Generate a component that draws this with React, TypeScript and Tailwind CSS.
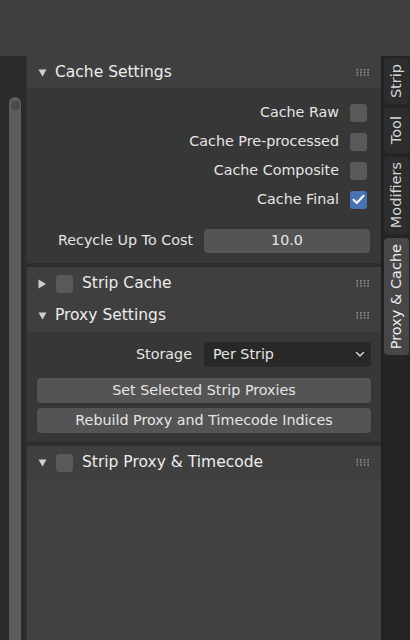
import React from 'react';

const font = { fontFamily: '"DejaVu Sans", "Liberation Sans", sans-serif' };

function Grip() {
  return (
    <svg width="14" height="7" viewBox="0 0 14 7" className="shrink-0">
      {[0, 1, 2].map((r) =>
        [0, 1, 2, 3].map((c) => (
          <rect key={`${r}-${c}`} x={c * 3.6 + 0.5} y={r * 2.6} width="1.6" height="1.6" fill="#8c8c8c" />
        ))
      )}
    </svg>
  );
}

function Tri({ open }: { open: boolean }) {
  return open ? (
    <svg width="9" height="8" viewBox="0 0 9 8" className="shrink-0">
      <path d="M0.5 0.5 L8.5 0.5 L4.5 7.5 Z" fill="#cfcfcf" />
    </svg>
  ) : (
    <svg width="9" height="10" viewBox="0 0 9 10" className="shrink-0">
      <path d="M0.5 0.5 L8 5 L0.5 9.5 Z" fill="#cfcfcf" />
    </svg>
  );
}

function Check({ on = false }: { on?: boolean }) {
  return (
    <div
      className={`flex h-[18px] w-[17px] shrink-0 items-center justify-center rounded-[3px] ${
        on ? 'bg-[#4772b3]' : 'bg-[#595959]'
      }`}
    >
      {on && (
        <svg width="13" height="11" viewBox="0 0 13 11">
          <path d="M1.5 5.8 L4.8 9 L11.5 1.8" fill="none" stroke="#ffffff" strokeWidth="2" strokeLinecap="round" strokeLinejoin="round" />
        </svg>
      )}
    </div>
  );
}

function Header({ title, open, check }: { title: string; open: boolean; check?: boolean }) {
  return (
    <div className="flex h-[33px] items-center bg-[#3f3f3f] pl-[11px] pr-[11px]">
      <Tri open={open} />
      {check ? (
        <div className="ml-[9px] flex items-center gap-[9px]">
          <Check />
          <span className="text-[15.5px] text-[#ececec]">{title}</span>
        </div>
      ) : (
        <span className="ml-[8px] text-[15.5px] text-[#ececec]">{title}</span>
      )}
      <div className="flex-1" />
      <Grip />
    </div>
  );
}

function CheckRow({ label, on }: { label: string; on?: boolean }) {
  return (
    <div className="flex h-[29px] items-center justify-end gap-[11px] pr-[14px]">
      <span className="text-[14.3px] text-[#e4e4e4]">{label}</span>
      <Check on={on} />
    </div>
  );
}

function Tab({ label, h, active }: { label: string; h: string; active?: boolean }) {
  return (
    <div
      className={`flex w-[25px] items-center justify-center rounded-[4px] ${h} ${
        active ? 'bg-[#474747] text-[#ededed]' : 'bg-[#2d2d2d] text-[#d4d4d4]'
      }`}
    >
      <span className="rotate-180 text-[14.5px] leading-none [writing-mode:vertical-rl]">{label}</span>
    </div>
  );
}

export default function App() {
  return (
    <div className="flex h-[640px] w-[410px] flex-col overflow-hidden bg-[#404040]" style={font}>
      <div className="h-[56px] shrink-0" />
      <div className="flex flex-1">
        {/* left scrollbar gutter */}
        <div className="flex w-[25px] flex-col bg-[#2b2b2b] pl-[9px] pt-[41px]">
          <div className="flex w-[12px] flex-1 justify-center rounded-t-full bg-[#5c5c5c] pt-[4px]">
            <div className="h-[9px] w-[9px] rounded-full bg-[#4a4a4a]" />
          </div>
        </div>
        <div className="w-[2px] bg-[#2f2f2f]" />

        {/* panels */}
        <div className="flex flex-1 flex-col bg-[#3f3f3f]">
          <div className="h-[32px]">
            <Header title="Cache Settings" open />
          </div>
          <div className="flex flex-col bg-[#373737] pb-[10px] pt-[10px]">
            <CheckRow label="Cache Raw" />
            <CheckRow label="Cache Pre-processed" />
            <CheckRow label="Cache Composite" />
            <CheckRow label="Cache Final" on />
            <div className="mt-[15px] flex h-[24px] items-center pr-[11px]">
              <span className="w-[177px] pr-[11px] text-right text-[14.3px] text-[#e4e4e4]">Recycle Up To Cost</span>
              <div className="flex h-[24px] flex-1 items-center justify-center rounded-[4px] bg-[#545454] text-[14.3px] text-[#e4e4e4]">
                10.0
              </div>
            </div>
          </div>
          <div className="h-[4px] bg-[#2e2e2e]" />
          <Header title="Strip Cache" open={false} check />
          <div className="-mt-[1px]">
            <Header title="Proxy Settings" open />
          </div>
          <div className="flex flex-col bg-[#373737] pb-[9px] pl-[10px] pr-[10px] pt-[10px]">
            <div className="flex h-[25px] items-center">
              <span className="w-[167px] pr-[12px] text-right text-[14.3px] text-[#e4e4e4]">Storage</span>
              <div className="flex h-[25px] flex-1 items-center justify-between rounded-[4px] bg-[#282828] pl-[9px] pr-[6px] text-[14.3px] text-[#e4e4e4]">
                <span>Per Strip</span>
                <svg width="10" height="7" viewBox="0 0 10 7">
                  <path d="M1.5 1.5 L5 5 L8.5 1.5" fill="none" stroke="#cfcfcf" strokeWidth="1.6" strokeLinecap="round" strokeLinejoin="round" />
                </svg>
              </div>
            </div>
            <div className="mt-[11px] flex h-[25px] items-center justify-center rounded-[4px] bg-[#545454] text-[14.3px] text-[#e4e4e4]">
              Set Selected Strip Proxies
            </div>
            <div className="mt-[5px] flex h-[25px] items-center justify-center rounded-[4px] bg-[#545454] text-[14.3px] text-[#e4e4e4]">
              Rebuild Proxy and Timecode Indices
            </div>
          </div>
          <div className="h-[4px] bg-[#2e2e2e]" />
          <Header title="Strip Proxy & Timecode" open check />
          <div className="flex-1 bg-[#414141]" />
        </div>

        {/* tabs */}
        <div className="flex w-[29px] flex-col gap-[4px] border-l-2 border-[#1f1f1f] bg-[#242424] pl-[1px] pt-[2px]">
          <Tab label="Strip" h="h-[46px]" />
          <Tab label="Tool" h="h-[45px]" />
          <Tab label="Modifiers" h="h-[77px]" />
          <Tab label="Proxy & Cache" h="h-[117px]" active />
        </div>
      </div>
    </div>
  );
}
